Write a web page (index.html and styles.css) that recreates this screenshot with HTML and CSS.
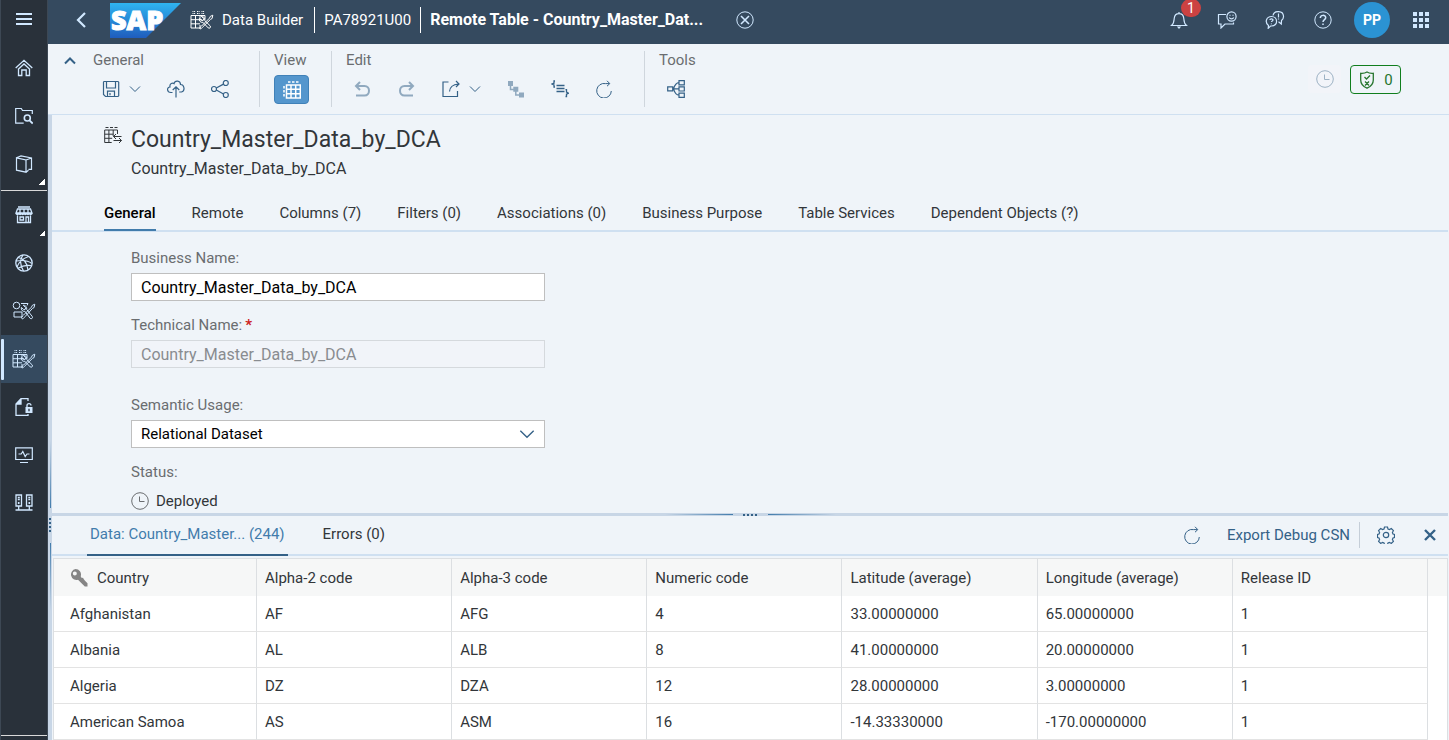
FILE: index.html
```html
<!DOCTYPE html>
<html lang="en">
<head>
<meta charset="utf-8">
<title>Remote Table - Country_Master_Data_by_DCA</title>
<meta name="viewport" content="width=device-width, initial-scale=1">
<link rel="stylesheet" href="styles.css">
</head>
<body>
<svg class="sprite" aria-hidden="true">
  <symbol id="i-chevron-down" viewBox="0 0 12 12"><path d="M1 3.500l5 5 5-5"/></symbol>
  <symbol id="i-clock" viewBox="0 0 18 18"><circle cx="9" cy="9" r="8.300"/><path d="M8.500 4.500V9.500h5"/></symbol>
  <symbol id="i-refresh" viewBox="0 0 18 18"><path d="M14.300 3.600H10.500a7.300 7.300 0 1 0 5.800 7.400M12 .8l2.800 2.800L12 6.200"/></symbol>
  <symbol id="i-table-tools" viewBox="0 0 24 20">
    <path d="M1 5.500h14v4M1 5.500v12.500h10M5.500 5.500V18M10 5.500v5M10 15v3M1 9.700h11M1 13.800h9"/>
    <path d="M2.500 1.500h3M7 1.500h3M11.500 1.500h3M2.500 3.500h3M7 3.500h3M11.500 3.500h3" stroke-dasharray="1 .6"/>
    <path d="M11.200 6.200l2.400 2.300-.3 1.800-1.600.3-2.300-2.200c-.7 2.300 1.200 4.500 3.500 3.900l5.300 5.600c1.400 1 3-.6 2-2l-5.500-5.400c.5-2.500-1.500-4.500-3.500-4.300z"/>
    <path d="M22.800 5.200l-2.500 1.200-.8 1.700-8 8c-1.300 1.200-2.800 2.200-1.500 2.600 1 .6 2-.8 3-2l7.500-7.300 1.600-.9z"/>
  </symbol>
</svg>

<div class="app">
  <nav class="rail" aria-label="Main navigation">
    <button class="rail-menu" aria-label="Toggle navigation"><svg class="icon" viewBox="0 0 18 18" stroke-width="2"><path d="M1 4h16M1 9h16M1 14h16"/></svg></button>
    <div class="rail-group">
      <a class="rail-item" href="#home" aria-label="Home"><svg class="icon" viewBox="0 0 18 18" stroke-width="1.300"><path d="M.7 9L9 1.300 17.300 9M3 10.500L9 5l6 5.500M3.500 10v6.500h3.300V11h4.400v5.500h3.300V10"/></svg></a>
      <a class="rail-item" href="#repository" aria-label="Repository Explorer"><svg class="icon" viewBox="0 0 18 18" stroke-width="1.200"><path d="M17.300 7V3.500H7.500L6.300 1.500H.7v14.700h8"/><circle cx="12.300" cy="11" r="3" stroke-width="1.600"/><path d="M14.500 13.300l3.200 3.200" stroke-width="1.800"/></svg></a>
      <a class="rail-item rail-more" href="#catalog" aria-label="Catalog"><svg class="icon" viewBox="0 0 18 18" stroke-width="1.200"><path d="M1.500 2.800l9.500 2.200v12.200l-9.500-2zM1.500 2.800L6 .9l10.500 2v11.500h-3M11 5l5.500-2M11 17.200l2.500-2"/></svg></a>
    </div>
    <div class="rail-group rail-second">
      <a class="rail-item rail-more" href="#marketplace" aria-label="Data Marketplace"><svg class="icon" viewBox="0 0 18 18"><path d="M3 1h12M2.500 3h13l1.500 4H1zM1 7c0 2 2.700 2 2.700 0 0 2 2.700 2 2.700 0 0 2 2.600 2 2.600 0 0 2 2.600 2 2.600 0 0 2 2.700 2 2.700 0 0 2 2.700 2 2.700 0M5 3v4M9 3v4M13 3v4M2.500 9.500V16.500h13V9.500M5 11h3.500v3H5zM11 16.500V11h2.500v5.500" stroke-width="1.300"/></svg></a>
      <a class="rail-item" href="#business" aria-label="Semantic Onboarding"><svg class="icon" viewBox="0 0 18 18"><circle cx="9" cy="9" r="8.200" stroke-width="1.300"/><path d="M3 3.500C8 4 12 8.500 13 16M1.200 7C7 6 13 6.500 16.800 9.500M8 .8C4.800 5 5 11 8.500 17M13.500 2.500C8 4.500 3.500 8.500 2 13M3 14.300c5-3 9.500-3.300 13-2.600" stroke-width="1.200"/></svg></a>
      <a class="rail-item" href="#business-builder" aria-label="Business Builder"><svg class="icon icon-wide" viewBox="0 0 24 20"><circle cx="4.500" cy="4.500" r="3.300"/><path d="M9 2.500h7l-1 2M2 11h8v5H2z"/><path d="M11.200 4.200l2.400 2.300-.3 1.800-1.600.3-2.300-2.200c-.7 2.300 1.200 4.500 3.500 3.900l5.300 7.100c1.400 1 3-.6 2-2l-5.500-6.900c.5-2.500-1.500-4.500-3.500-4.300z"/><path d="M22.800 3.200l-2.500 1.200-.8 1.700-8 8c-1.300 1.200-2.800 2.700-1.500 3.600 1 .6 2-.8 3-2l7.500-8.300 1.600-.9z"/></svg></a>
      <a class="rail-item rail-active" href="#data-builder" aria-label="Data Builder" aria-current="page"><svg class="icon icon-wide"><use href="#i-table-tools"/></svg></a>
      <a class="rail-item" href="#access" aria-label="Data Access Controls"><svg class="icon" viewBox="0 0 18 18" stroke-width="1.300"><path d="M13 3V.7H6L1 6v11.300h12V16M6 1v5H1"/><path class="solid" d="M1 6l5-5.300V6zM10.500 9h7v6h-7z"/><path d="M12 9V7.500c0-2.600 4-2.600 4 0"/><path class="keyhole" d="M14 10.800v2.400"/></svg></a>
      <a class="rail-item" href="#monitor" aria-label="Data Integration Monitor"><svg class="icon" viewBox="0 0 18 18" stroke-width="1.200"><path d="M.7 1.800h16.600v11.700H.7zM5 16.500h8M3.500 8h2.700l1.600-2.500 2.400 5L12 8h2.500"/></svg></a>
      <a class="rail-item" href="#connections" aria-label="Connections"><svg class="icon" viewBox="0 0 18 18" stroke-width="1.300"><path d="M1 1h5.500v11H1zM11.500 1H17v11h-5.500zM3.700 12v4M14.300 12v4M.5 16h17M2.800 3.500h2M2.800 5.500h2M13.300 3.500h2M13.300 5.500h2"/><path d="M3.700 8v2M14.300 8v2" stroke-width="1.600"/></svg></a>
    </div>
    <div class="rail-foot"></div>
  </nav>

  <div class="main">
    <header class="shell">
      <button class="shell-btn" aria-label="Back"><svg class="icon" viewBox="0 0 18 18" stroke-width="2.200"><path d="M13 2L6 9l7 7"/></svg></button>
      <a class="logo" href="#home" aria-label="SAP">
        <svg viewBox="0 0 71 35" width="71" height="35">
          <defs><linearGradient id="sap" x1="0" y1="0" x2="0" y2="1"><stop offset="0" stop-color="#2fb4f0"/><stop offset="1" stop-color="#1f5dbd"/></linearGradient></defs>
          <path d="M0 0h71L36 35H0z" fill="url(#sap)"/>
          <text class="logo-text" x="1" y="27">SAP</text>
        </svg>
      </a>
      <nav class="crumbs" aria-label="Breadcrumb">
        <a href="#data-builder" class="crumb crumb-app"><svg class="icon icon-wide"><use href="#i-table-tools"/></svg>Data Builder</a>
        <a href="#space" class="crumb">PA78921U00</a>
        <span class="crumb crumb-here">Remote Table - Country_Master_Dat...</span>
      </nav>
      <button class="shell-btn" aria-label="Close"><svg class="icon" viewBox="0 0 18 18"><circle cx="9" cy="9" r="8.200"/><path d="M5 5l8 8M13 5l-8 8" stroke-width="1.600"/></svg></button>
      <div class="shell-end">
        <button class="shell-btn bell" aria-label="Notifications, 1 new"><svg class="icon" viewBox="0 0 18 18" stroke-width="1.200"><path d="M1.500 14.500c2.500-2 2.500-4 2.700-7C4.500 4.300 6.500 2.700 9 2.700s4.500 1.600 4.800 4.800c.2 3 .2 5 2.700 7zM9 2.500V1"/><path class="solid" d="M6.800 15.500h4.400L9 18z"/></svg><span class="badge">1</span></button>
        <button class="shell-btn" aria-label="Feedback"><svg class="icon icon-mid" viewBox="0 0 20 18" stroke-width="1.200"><path d="M9 3.500H1.500v9.500H4v4l4-4h8.500v-1.500"/><circle cx="14.500" cy="5.500" r="4.600"/><path d="M12.300 6.500c.8 1.800 3.600 1.800 4.400 0M13 3.700v1M16 3.700v1"/></svg></button>
        <button class="shell-btn" aria-label="Community"><svg class="icon icon-mid" viewBox="0 0 20 18" stroke-width="1.200"><path d="M3.500 14.500C-.7 11 1.500 5.500 6.500 5.500c6.500 0 7 9.500 0 9.500H5.500l-2.300 2.300z"/><path d="M8 4.500C9-.8 18-.8 18.500 5c.2 2-.7 3.500-2 4.500l-.2 3.500-2.800-2.300M4.800 9c.2-1.600 3.300-1.500 3.200.1 0 1-1.500 1-1.500 2M6.400 12.500v.8M13.500 2.500v4M13.500 7.500v.9"/></svg></button>
        <button class="shell-btn" aria-label="Help"><svg class="icon" viewBox="0 0 18 18"><circle cx="9" cy="9" r="8.200"/><path d="M6.300 7c0-3.500 5.400-3.400 5.400-.3C11.700 8.700 9 8.500 9 11M9 12.500V14" stroke-width="1.500"/></svg></button>
        <button class="avatar" aria-label="Profile">PP</button>
        <button class="shell-btn" aria-label="Products"><svg class="icon" viewBox="0 0 18 18" stroke-width="4" stroke-dasharray="4 2"><path d="M1 3h16M1 9h16M1 15h16"/></svg></button>
      </div>
    </header>

    <div class="toolbar" role="toolbar" aria-label="Editor">
      <button class="collapse" aria-label="Collapse toolbar"><svg class="icon icon-small" viewBox="0 0 12 12" stroke-width="2"><path d="M1 8.500l5-5 5 5"/></svg></button>
      <section class="tool-group tool-first">
        <h2>General</h2>
        <div class="tools">
          <button class="tool" aria-label="Save"><svg class="icon" viewBox="0 0 18 18" stroke-width="1.200"><path d="M2 1.500h14l.7.700v13.600l-.7.700H3.500l-2-2V2.200zM4.500 1.500V8h9V1.500M5.500 16.500v-5.300h7v5.300M8 13v2.200"/></svg><svg class="icon icon-small"><use href="#i-chevron-down"/></svg></button>
          <button class="tool" aria-label="Deploy"><svg class="icon" viewBox="0 0 18 18" stroke-width="1.200"><path d="M5.500 12.500H4C-.5 12.500-.3 7 3 7c-.8-3.500 2.800-4.500 4-3.300C8-.3 13.500.5 13.500 4.500c3.800-.3 5 6.500 1 7.500h-2.300M9 17.500V7M5.700 10L9 6.800l3.300 3.200"/></svg></button>
          <button class="tool" aria-label="Impact and Lineage"><svg class="icon" viewBox="0 0 18 18" stroke-width="1.200"><circle cx="3" cy="9" r="2.500"/><circle cx="14.800" cy="3" r="2.500"/><circle cx="14.800" cy="15" r="2.500"/><path d="M5.300 8l7.200-3.900M5.300 10l7.200 4"/></svg></button>
        </div>
      </section>
      <section class="tool-group">
        <h2>View</h2>
        <button class="tool tool-on" aria-label="Data preview" aria-pressed="true"><svg class="icon" viewBox="0 0 18 18"><path d="M3.500 4h13.800v13H3.500zM8 4v13M12.700 4v13M3.500 8.300h13.800M3.500 12.700h13.800" stroke-width="1.500"/><path d="M5 1h12" stroke-width="1.500" stroke-dasharray="2.500 1.500"/><path d="M1 5v12" stroke-dasharray="2.500 1.500" stroke-width="1.500"/></svg></button>
      </section>
      <section class="tool-group tool-edit">
        <h2>Edit</h2>
        <div class="tools">
          <button class="tool" aria-label="Undo" disabled><svg class="icon" viewBox="0 0 18 18" stroke-width="2"><path d="M6 2L2 6l4 4M2 6h8.500c6 0 6 9.500 0 9.500H2"/></svg></button>
          <button class="tool" aria-label="Redo" disabled><svg class="icon" viewBox="0 0 18 18" stroke-width="2"><path d="M11 2l4 4-4 4M15 6H6.500C.5 6 .5 15.500 6.500 15.500H15"/></svg></button>
          <button class="tool" aria-label="Export"><svg class="icon" viewBox="0 0 18 18" stroke-width="1.200"><path d="M6.500 2H1v14.500h14.500V11"/><path d="M7.500 11.500c.3-4 3-7 9-7.500M14 1l3 3-3 3"/></svg><svg class="icon icon-small"><use href="#i-chevron-down"/></svg></button>
          <button class="tool" aria-label="Hierarchies" disabled><svg class="icon" viewBox="0 0 18 18"><path class="solid" d="M1 1h5v5H1zM6.300 6.700h5v5h-5zM12 12.500h5v5h-5z"/><path d="M3.500 5v4.500H7M8.800 11v4H13" stroke-width="1.500"/></svg></button>
          <button class="tool" aria-label="Edit CSN"><svg class="icon" viewBox="0 0 18 18" stroke-width="1.300"><path d="M4 1H3v2.200L1 4l2 1v2h1M5.500 5.500h8M5.500 8.500h8M5.500 11.500h8M14.500 9.700h1v2.500l2 1-2 1v2.300h-1"/></svg></button>
          <button class="tool" aria-label="Refresh"><svg class="icon"><use href="#i-refresh"/></svg></button>
        </div>
      </section>
      <section class="tool-group">
        <h2>Tools</h2>
        <div class="tools">
          <button class="tool" aria-label="Data lineage"><svg class="icon" viewBox="0 0 18 18" stroke-width="1.200"><path d="M.7 6.800h5v4h-5zM12 .7h5.300v4.200H12zM12 6.800h5.300V11H12zM12 13.100h5.300v4.200H12zM5.700 8.900H12M12 2.700c-3 0-4.500 3-5.500 6.200 1 3.300 2.500 6.300 5.500 6.300"/></svg></button>
        </div>
      </section>
      <div class="toolbar-end">
        <button class="status-btn" aria-label="Version history" disabled><svg class="icon"><use href="#i-clock"/></svg></button>
        <button class="valid-btn" aria-label="Validation messages: 0"><svg class="icon" viewBox="0 0 18 18" stroke-width="1.300"><path d="M9 1c2 1.300 4 1.500 6.300 1.300V9c0 4.500-3 6.800-6.300 8.200C5.700 15.800 2.700 13.500 2.700 9V2.300C5 2.500 7 2.300 9 1zM6.500 6l2 2 3.500-3.500M7 10.500l4 4M11 10.500l-4 4"/></svg><span>0</span></button>
      </div>
    </div>

    <div class="workspace">
      <div class="splitter splitter-v"><i class="fade fade-up"></i><i class="grip"></i><i class="fade fade-down"></i></div>
      <div class="content">
        <main class="editor">
          <div class="object-head">
            <svg class="icon" viewBox="0 0 18 18"><path d="M13.500 8V4H.7v12.500h7M4.900 4v12.500M9.200 4v6M.7 8.200h8.500M.7 12.300h7.500M17.500 10.500H9.500M12 8l-2.500 2.500L12 13M9.500 14.500h8M15 12l2.500 2.500L15 17"/><path d="M1.500 1.500h3M6 1.500h3M10.500 1.500h3"/></svg>
            <h1>Country_Master_Data_by_DCA</h1>
            <p>Country_Master_Data_by_DCA</p>
          </div>
          <div class="tabs" role="tablist">
            <button role="tab" aria-selected="true">General</button>
            <button role="tab">Remote</button>
            <button role="tab">Columns (7)</button>
            <button role="tab">Filters (0)</button>
            <button role="tab">Associations (0)</button>
            <button role="tab">Business Purpose</button>
            <button role="tab">Table Services</button>
            <button role="tab">Dependent Objects (?)</button>
          </div>
          <form class="form">
            <div class="field">
              <label for="business-name">Business Name:</label>
              <input id="business-name" type="text" value="Country_Master_Data_by_DCA">
            </div>
            <div class="field field-tech">
              <label for="technical-name">Technical Name:<b class="required">*</b></label>
              <input id="technical-name" type="text" value="Country_Master_Data_by_DCA" disabled>
            </div>
            <div class="field">
              <label for="usage">Semantic Usage:</label>
              <div class="select">
                <select id="usage"><option>Relational Dataset</option></select>
                <svg class="icon"><use href="#i-chevron-down"/></svg>
              </div>
            </div>
            <div class="field">
              <span class="label">Status:</span>
              <div class="status"><svg class="icon"><use href="#i-clock"/></svg>Deployed</div>
            </div>
          </form>
        </main>

        <div class="splitter splitter-h"><i class="fade fade-left"></i><i class="grip"></i><i class="fade fade-right"></i></div>

        <section class="preview" aria-label="Data preview">
          <div class="preview-bar">
            <div class="preview-tabs" role="tablist">
              <button role="tab" aria-selected="true">Data: Country_Master... (244)</button>
              <button role="tab">Errors (0)</button>
            </div>
            <div class="preview-actions">
              <button class="tool" aria-label="Refresh data"><svg class="icon"><use href="#i-refresh"/></svg></button>
              <button class="export">Export Debug CSN</button>
              <button class="tool settings" aria-label="Settings"><svg class="icon" viewBox="0 0 18 18" stroke-width="1.200"><circle cx="9" cy="9" r="2.700"/><path d="M7.500 1h3l.5 2 1.500.6 1.800-1 2.100 2.100-1 1.800.6 1.500 1.500.5v3l-1.500.5-.6 1.500 1 1.800-2.100 2.100-1.800-1-1.500.6-.5 1.500h-3l-.5-1.500-1.500-.6-1.800 1-2.100-2.100 1-1.800L2 12l-1.500-.5v-3L2 8l.6-1.500-1-1.800 2.100-2.100 1.800 1L7 3z"/></svg></button>
              <button class="tool" aria-label="Close preview"><svg class="icon icon-small" viewBox="0 0 12 12" stroke-width="2.400"><path d="M1 1l10 10M11 1L1 11"/></svg></button>
            </div>
          </div>
          <table class="grid">
            <colgroup><col class="col-key"><col><col><col><col><col><col><col class="col-scroll"></colgroup>
            <thead>
              <tr><th scope="col"><span class="key-head"><svg class="key" viewBox="0 0 18 18"><path fill-rule="evenodd" d="M5.500 0a5.500 5.500 0 0 1 5.200 7.300l1 1.700 1.300-.2.800 1.500 1.200 1.500 2.500 2.500v3.200h-2.700L8 10.700a5.500 5.500 0 1 1-2.500-10.700zM4.800 2.500a2 2 0 1 0 .01 4 2 2 0 0 0 0-4z"/></svg>Country</span></th><th scope="col">Alpha-2 code</th><th scope="col">Alpha-3 code</th><th scope="col">Numeric code</th><th scope="col">Latitude (average)</th><th scope="col">Longitude (average)</th><th scope="col">Release ID</th><td></td></tr>
            </thead>
            <tbody>
              <tr><td>Afghanistan</td><td>AF</td><td>AFG</td><td>4</td><td>33.00000000</td><td>65.00000000</td><td>1</td><td></td></tr>
              <tr><td>Albania</td><td>AL</td><td>ALB</td><td>8</td><td>41.00000000</td><td>20.00000000</td><td>1</td><td></td></tr>
              <tr><td>Algeria</td><td>DZ</td><td>DZA</td><td>12</td><td>28.00000000</td><td>3.00000000</td><td>1</td><td></td></tr>
              <tr><td>American Samoa</td><td>AS</td><td>ASM</td><td>16</td><td>-14.33330000</td><td>-170.00000000</td><td>1</td><td></td></tr>
            </tbody>
          </table>
        </section>
      </div>
    </div>
  </div>
</div>
</body>
</html>
```

FILE: styles.css
```css
:root {
  --navy: #354a5f;
  --rail: #29313a;
  --page: #eff4f9;
  --blue: #346187;
  --accent: #427cac;
  --line: #cfe0f1;
  --splitter: #c8d6e6;
  --text: #32363a;
  --muted: #6a6d70;
  --ice: #d1e8ff;
}

* { box-sizing: border-box; }

body {
  margin: 0;
  background: var(--page);
  color: var(--text);
  font: 15px/18px Roboto, "Liberation Sans", sans-serif;
}

button, input, select { font: inherit; color: inherit; }
button { padding: 0; border: 0; background: none; }
a { color: inherit; text-decoration: none; }
h1, h2, p { margin: 0; font-weight: 400; }

.sprite { position: absolute; width: 0; height: 0; }

.icon {
  flex: none;
  display: block;
  width: 18px;
  height: 18px;
  fill: none;
  stroke: currentColor;
}
.icon-small { width: 12px; height: 12px; }
.icon-mid { width: 20px; }
.icon-wide { width: 24px; height: 20px; }
.solid { fill: currentColor; stroke: none; }
.keyhole { stroke: var(--rail); }

.app { display: flex; height: 100vh; overflow: hidden; }
.main { flex: 1; min-width: 0; display: flex; flex-direction: column; }

/* Navigation rail */
.rail {
  flex: none;
  width: 48px;
  display: flex;
  flex-direction: column;
  background: var(--rail);
  border-left: 1px solid #3d4854;
  border-right: 1px solid #3d4854;
  color: var(--ice);
}
.rail-menu {
  flex: none;
  height: 44px;
  padding-bottom: 6px;
  display: grid;
  place-items: center;
}
.rail-item {
  position: relative;
  height: 48px;
  display: grid;
  place-items: center;
}
.rail-more::after {
  content: "";
  position: absolute;
  right: 2px;
  bottom: 3px;
  width: 6px;
  height: 6px;
  background: linear-gradient(135deg, transparent 50%, #fff 50%);
}
.rail-second { margin-top: 2px; border-top: 1px solid #d9d9d9; }
.rail-active { background: var(--navy); }
.rail-active::before {
  content: "";
  position: absolute;
  left: 0;
  top: 4px;
  bottom: 3px;
  width: 3px;
  border-radius: 1px;
  background: var(--ice);
}
.rail-foot { margin-top: auto; height: 5px; border-top: 1px solid #d9d9d9; }

/* Shell header */
.shell {
  flex: none;
  height: 44px;
  padding: 0 19px 4px 24px;
  display: flex;
  align-items: center;
  background: var(--navy);
  color: #fff;
}
.shell-btn { color: var(--ice); }
.logo { margin-left: 20px; display: block; height: 35px; }
.logo-text {
  fill: #fff;
  stroke: #fff;
  stroke-width: 1px;
  font: 800 27px "Open Sans", sans-serif;
}
.crumbs { display: flex; align-items: center; margin: 0 24px 0 9px; }
.crumb { line-height: 26px; padding: 0 9px; white-space: nowrap; }
.crumb + .crumb { border-left: 1px solid #fff; }
.crumb-app { display: flex; align-items: center; gap: 8px; padding: 0 11px 0 0; }
.crumb-here { font-size: 16px; font-weight: 700; }
.shell-end { margin-left: auto; display: flex; align-items: center; gap: 30px; }
.shell-end .icon-mid { margin: 0 -1px; }
.bell { position: relative; }
.badge {
  position: absolute;
  left: 11px;
  top: -12px;
  width: 20px;
  border-radius: 9px;
  background: #cc4242;
  color: #fff;
  font-size: 14px;
}
.avatar {
  width: 36px;
  height: 36px;
  margin: 0 -8px;
  border-radius: 50%;
  background: #2b93d3;
  color: #fff;
  font-size: 14px;
  font-weight: 700;
}

/* Toolbar */
.toolbar {
  flex: none;
  display: flex;
  padding: 7px 48px 7px 16px;
  border-bottom: 1px solid var(--line);
  color: var(--blue);
}
.collapse { align-self: flex-start; padding-top: 4px; }
.tool-group { padding: 0 22px 3px 14px; border-left: 1px solid #cfd6dd; }
.tool-group h2 { margin-bottom: 6px; font-size: 15px; color: var(--muted); }
.tool-first { border-left: 0; padding-right: 30px; padding-left: 17px; }
.tool-edit { padding-right: 31px; }
.tools { display: flex; gap: 26px; height: 27px; padding-left: 8px; }
.tool-first .tools { padding-left: 9px; }
.tool { display: flex; align-items: center; gap: 9px; }
.tool:disabled { opacity: .5; }
.tool-on {
  width: 35px;
  height: 29px;
  justify-content: center;
  border: 1px solid #4081b8;
  border-radius: 4px;
  background: #5496cd;
  color: #fff;
}
.toolbar-end { margin-left: auto; padding-top: 14px; display: flex; gap: 9px; }
.status-btn {
  width: 33px;
  height: 28px;
  display: grid;
  place-items: center;
  border-radius: 4px;
  background: #f2f4f9;
  color: #9db2c4;
}
.valid-btn {
  width: 51px;
  height: 29px;
  display: flex;
  align-items: center;
  justify-content: center;
  gap: 8px;
  border: 1px solid #107e1e;
  border-radius: 4px;
  color: #27762f;
}

/* Splitters */
.workspace { flex: 1; min-height: 0; display: flex; padding-right: 1px; }
.content { flex: 1; min-width: 0; display: flex; flex-direction: column; }
.splitter {
  flex: none;
  display: flex;
  align-items: center;
  justify-content: center;
  gap: 10px;
  background: var(--splitter);
}
.splitter-v { width: 4px; flex-direction: column; padding-top: 195px; }
.splitter-h { height: 3px; }
.splitter-v .fade { width: 1px; height: 68px; }
.splitter-h .fade { height: 1px; width: 68px; }
.splitter-v .grip { width: 2px; height: 15px; background: repeating-linear-gradient(var(--blue) 0 2px, transparent 2px 4px); }
.splitter-h .grip { height: 2px; width: 15px; background: repeating-linear-gradient(90deg, var(--blue) 0 2px, transparent 2px 4px); }
.fade-up { background: linear-gradient(transparent, var(--accent)); }
.fade-down { background: linear-gradient(var(--accent), transparent); }
.fade-left { background: linear-gradient(90deg, transparent, var(--accent)); }
.fade-right { background: linear-gradient(90deg, var(--accent), transparent); }

/* Object page */
.editor { flex: 1; min-height: 0; overflow: hidden; }
.object-head {
  display: grid;
  grid-template-columns: 18px 1fr;
  column-gap: 9px;
  row-gap: 6px;
  padding: 11px 0 0 52px;
}
.object-head h1 { font-size: 23px; line-height: 28px; }
.object-head p { grid-column: 2; font-size: 16px; }
.tabs {
  display: flex;
  gap: 36px;
  margin-top: 19px;
  padding-left: 52px;
  border-bottom: 2px solid var(--line);
}
.tabs button { padding: 7px 0; margin-bottom: -1px; border-bottom: 2px solid transparent; white-space: nowrap; }
.tabs button[aria-selected="true"] { border-color: var(--accent); color: #000; font-weight: 500; }

.form { padding: 17px 0 0 79px; }
.field { max-width: 414px; margin-bottom: 15px; }
.field-tech { margin-bottom: 28px; }
.field label, .label { display: block; margin-bottom: 6px; color: var(--muted); }
.required { margin-left: 3px; color: #cc2222; }
.field input, .field select {
  display: block;
  width: 100%;
  height: 28px;
  padding: 0 9px;
  border: 1px solid #bfbfbf;
  border-radius: 0;
  background: #fff;
  color: #000;
}
.field input { font-size: 16px; }
.field input:disabled { border-color: #d5d9dd; background: #f1f4f9; color: #898c90; }
.field select { appearance: none; }
.select { position: relative; color: var(--blue); }
.select .icon { position: absolute; right: 10px; top: 6px; width: 16px; height: 16px; }
.status { display: flex; align-items: center; gap: 7px; margin-top: 11px; }
.status .icon { color: var(--muted); }

/* Data preview */
.preview { flex: none; padding-left: 1px; }
.preview-bar {
  display: flex;
  justify-content: space-between;
  align-items: stretch;
  height: 40px;
  margin-left: -1px;
  margin-bottom: 2px;
  border-bottom: 2px solid var(--line);
}
.preview-tabs { display: flex; gap: 32px; padding-left: 35px; }
.preview-tabs button { padding: 0 3px 3px; margin-bottom: -2px; border-bottom: 2px solid transparent; }
.preview-tabs button[aria-selected="true"] { border-color: var(--blue); color: var(--accent); }
.preview-actions { display: flex; align-items: center; padding-right: 12px; color: var(--blue); }
.export { margin: 0 9px 0 26px; }
.settings { height: 26px; padding: 0 29px 0 17px; border-left: 1px solid #c5ced8; }

.grid {
  width: 100%;
  table-layout: fixed;
  border-collapse: separate;
  border-spacing: 0;
  border: 1px solid #dcdfe2;
  border-width: 1px 1px 0;
  background: #fff;
}
.col-key { width: 203px; }
.col-scroll { width: 19px; }
.grid th, .grid td {
  height: 36px;
  padding: 0 8px;
  border-right: 1px solid #dcdfe2;
  border-bottom: 1px solid #e3e3e3;
  font-weight: 400;
  text-align: left;
  white-space: nowrap;
}
.grid thead th, .grid thead td { height: 37px; background: #f6f7f7; border-bottom: 0; }
.grid th:first-child, .grid td:first-child { padding-left: 16px; }
.grid td:last-child { padding: 0; border-right: 0; border-bottom: 0; }
.key-head { display: flex; align-items: center; gap: 9px; }
.key { width: 18px; height: 18px; fill: #858585; }
```
